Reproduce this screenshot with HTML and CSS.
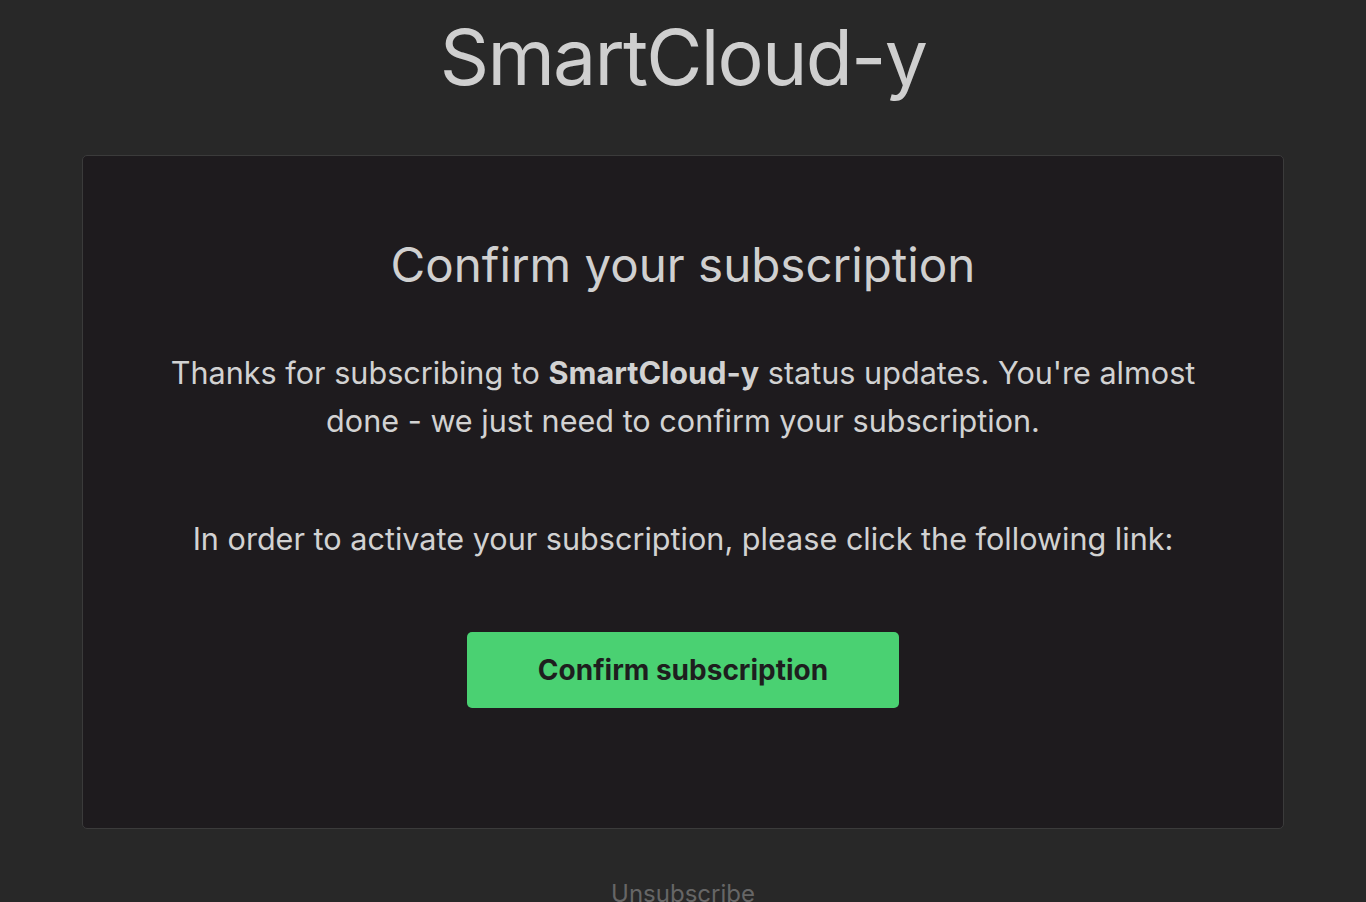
FILE: index.html
```html
<!DOCTYPE html>
<html lang="en">
<head>
<meta charset="utf-8">
<title>Confirm your subscription</title>
<link rel="stylesheet" href="styles.css">
</head>
<body>
<div class="page">
  <h1 class="brand">SmartCloud-y</h1>
  <div class="card">
    <h2 class="card-title">Confirm your subscription</h2>
    <p class="lead">Thanks for subscribing to <strong>SmartCloud-y</strong> status updates. You're almost done - we just need to confirm your subscription.</p>
    <p class="lead second">In order to activate your subscription, please click the following link:</p>
    <a class="btn" href="#">Confirm subscription</a>
  </div>
  <a class="unsub" href="#">Unsubscribe</a>
</div>
</body>
</html>
```

FILE: styles.css
```css
html, body {
  margin: 0;
  padding: 0;
  background: #282828;
  font-family: Inter, "Noto Sans", "Liberation Sans", sans-serif;
  color: #d2d2d2;
}
.page {
  display: flex;
  flex-direction: column;
  align-items: center;
  padding-top: 14px;
}
.brand {
  margin: 0;
  font-size: 77px;
  font-weight: 400;
  line-height: 86px;
  color: #cfcfcf;
  letter-spacing: -1.8px;
}
.card {
  box-sizing: border-box;
  width: 1202px;
  margin-top: 55px;
  background: #1e1b1e;
  border: 1px solid #3b3b3b;
  border-radius: 5px;
  display: flex;
  flex-direction: column;
  align-items: center;
  padding: 80px 60px 120px;
  text-align: center;
}
.card-title {
  margin: 0;
  font-size: 47.5px;
  font-weight: 400;
  line-height: 58px;
  color: #d0d0d0;
  letter-spacing: 0;
}
.lead {
  margin: 55px 0 0;
  font-size: 30.6px;
  line-height: 48px;
  color: #d2d2d2;
  max-width: 1070px;
}
.lead strong {
  font-weight: 700;
}
.lead.second {
  margin-top: 70px;
}
.btn {
  margin-top: 69px;
  width: 432px;
  height: 76px;
  display: flex;
  align-items: center;
  justify-content: center;
  background: #4ad172;
  border-radius: 5px;
  color: #1e1e1e;
  font-size: 28px;
  font-weight: 700;
  text-decoration: none;
}
.unsub {
  margin-top: 50px;
  font-size: 24px;
  color: #666666;
  text-decoration: none;
}
```
